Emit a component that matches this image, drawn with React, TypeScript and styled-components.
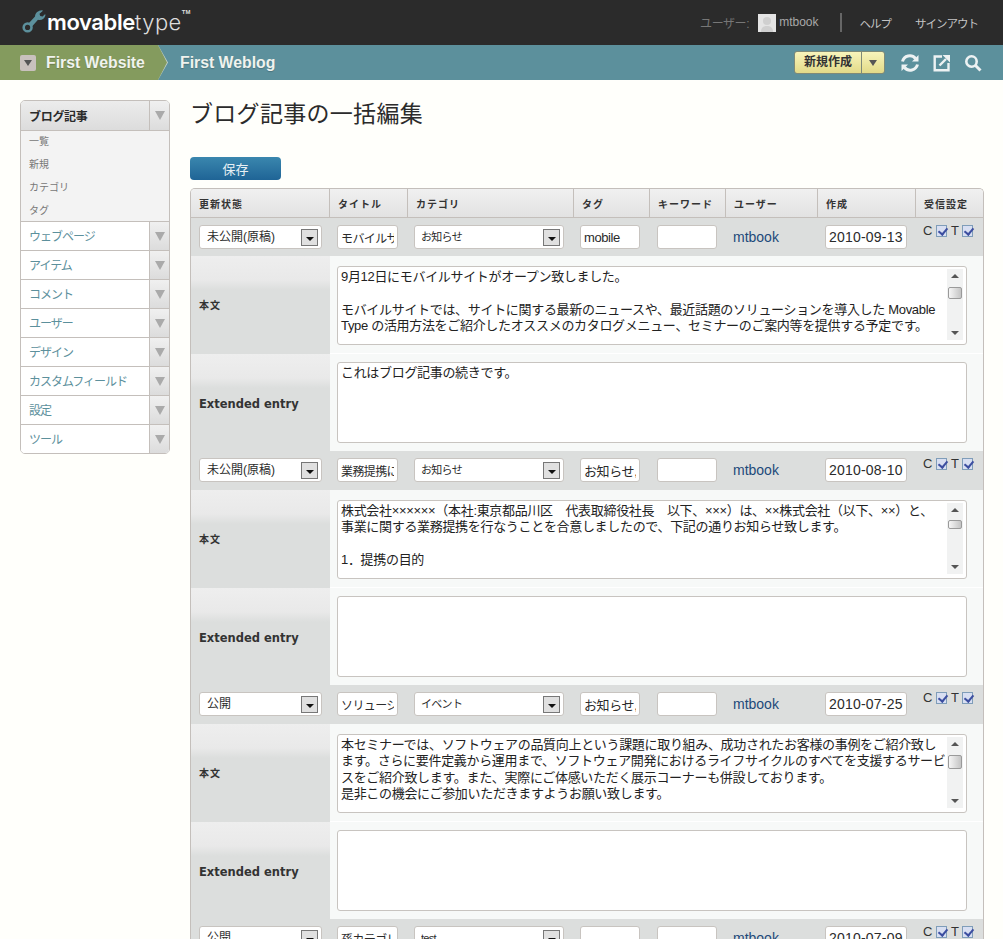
import { createGlobalStyle } from 'styled-components';
import styled from 'styled-components';

const jp = `"Liberation Sans", "Noto Sans CJK JP", sans-serif`;

const GlobalStyle = createGlobalStyle`
  html, body {
    margin: 0;
    height: 939px;
    overflow: hidden;
    background: #fffffb;
    font-family: ${jp};
    color: #2b2b2b;
  }
  * { box-sizing: border-box; }
`;

const Header = styled.header`
  height: 45px;
  background: #2b2b2b;
  display: flex;
  align-items: center;
  justify-content: space-between;
  padding: 0 25px 0 22px;
`;

const Logo = styled.div`
  display: flex;
  align-items: flex-start;
  height: 24px;
  margin-top: -2px;
`;

const LogoText = styled.span`
  font-family: Inter, sans-serif;
  font-size: 22px;
  line-height: 24px;
  color: #fff;
  margin-left: 1px;
  b { font-weight: 600; letter-spacing: -0.4px; }
  span { font-weight: 300; letter-spacing: 0.4px; color: #ddd; }
`;

const Tm = styled.sup`
  font-family: "Liberation Sans", sans-serif;
  font-size: 6px;
  font-weight: bold;
  line-height: 8px;
  color: #ddd;
  margin: -2px 0 0 0;
`;

const UserNav = styled.nav`
  display: flex;
  align-items: center;
  font-size: 12px;
`;

const UserLabel = styled.span`
  color: #777;
  letter-spacing: -0.4px;
  margin-right: 9px;
`;

const Avatar = styled.span`
  width: 18px;
  height: 18px;
  background: #e4e4e4;
  display: flex;
  margin-right: 3px;
`;

const UserName = styled.span`
  color: #a8a8a8;
  padding-right: 21px;
  border-right: 2px solid #666;
  line-height: 19px;
  margin-right: 18px;
`;

const TopLink = styled.a<{ $last?: boolean }>`
  color: #c4c4c4;
  font-size: 11.5px;
  letter-spacing: -1px;
  margin-right: ${p => (p.$last ? 0 : 24)}px;
`;

const Crumbs = styled.div`
  height: 35px;
  background: #5c909c;
  display: flex;
  align-items: center;
  justify-content: space-between;
  padding-right: 21px;
`;

const CrumbGroup = styled.div`
  display: flex;
  align-items: center;
  height: 100%;
`;

const Website = styled.div`
  position: relative;
  width: 158px;
  height: 100%;
  background: #849b5e;
  display: flex;
  align-items: center;
  padding-left: 20px;
  &::after {
    content: "";
    position: absolute;
    left: 158px;
    top: 0;
    width: 9px;
    height: 35px;
    background: #849b5e;
    clip-path: polygon(0 0, 100% 50%, 0 100%);
  }
  &::before {
    content: "";
    position: absolute;
    left: 158px;
    top: 0;
    width: 10px;
    height: 35px;
    background: #c9d4cf;
    clip-path: polygon(0 0, 100% 50%, 0 100%);
  }
`;

const Toggler = styled.span`
  width: 16px;
  height: 16px;
  border-radius: 2px;
  background: #c9c1bd;
  display: flex;
  align-items: center;
  justify-content: center;
  margin-right: 10px;
  &::after {
    content: "";
    border: 4px solid transparent;
    border-top: 6px solid #555;
    border-bottom: 0;
  }
`;

const CrumbText = styled.span<{ $offset?: number }>`
  font-size: 15.8px;
  font-weight: bold;
  color: #f0f3ee;
  margin-left: ${p => p.$offset ?? 0}px;
  text-shadow: 0 1px 1px rgba(0, 0, 0, 0.2);
  white-space: nowrap;
`;

const Actions = styled.div`
  display: flex;
  align-items: center;
`;

const NewButton = styled.div`
  display: flex;
  height: 23px;
  border: 1px solid #7f8a78;
  border-radius: 3px;
  background: linear-gradient(#f8f4bb, #e2da88);
  margin-right: 2px;
`;

const NewLabel = styled.span`
  width: 67px;
  text-align: center;
  font-size: 12px;
  font-weight: bold;
  line-height: 21px;
  color: #333;
  border-right: 1px solid #7f8a78;
`;

const NewArrow = styled.span`
  width: 22px;
  display: flex;
  align-items: center;
  justify-content: center;
  &::after {
    content: "";
    border: 4px solid transparent;
    border-top: 6px solid #555;
    border-bottom: 0;
  }
`;

const ActionIcon = styled.svg`
  display: block;
  margin-left: 13px;
  fill: none;
  stroke: #edf2f3;
`;

const Main = styled.div`
  display: flex;
  align-items: flex-start;
  padding: 20px 19px 0 20px;
  gap: 20px;
`;

const Menu = styled.aside`
  width: 150px;
  flex: none;
  border: 1px solid #c4bfbb;
  border-radius: 5px;
  overflow: hidden;
  background: #fff;
`;

const MenuRow = styled.div<{ $active?: boolean }>`
  display: flex;
  height: ${p => (p.$active ? 29 : 28)}px;
  background: ${p => (p.$active ? 'linear-gradient(#ececec, #dcdcdc)' : '#fff')};
  & + & { border-top: 1px solid #c4bfbb; height: 29px; }
`;

const MenuLabel = styled.a<{ $active?: boolean }>`
  flex: 1;
  font-size: 12px;
  line-height: 28px;
  padding: ${p => (p.$active ? '2px' : '1px')} 0 0 8px;
  letter-spacing: ${p => (p.$active ? -0.3 : -1)}px;
  color: ${p => (p.$active ? '#2b2b2b' : '#5c909c')};
  font-weight: ${p => (p.$active ? 'bold' : 'normal')};
`;

const MenuArrow = styled.span`
  width: 20px;
  border-left: 1px solid #c4bfbb;
  background: linear-gradient(#f0f0f0, #dcdcdc);
  display: flex;
  align-items: center;
  justify-content: center;
  &::after {
    content: "";
    border: 5px solid transparent;
    border-top: 9px solid #aaa;
    border-bottom: 0;
  }
`;

const SubMenu = styled.div`
  background: #f3f3f3;
  border-top: 1px solid #c4bfbb;
  border-bottom: 1px solid #c4bfbb;
  height: 92px;
`;

const SubItem = styled.a`
  display: block;
  height: 23px;
  line-height: 21px;
  padding-left: 8px;
  font-size: 10px;
  color: #777;
`;

const Content = styled.main`
  flex: 1;
  min-width: 0;
`;

const Title = styled.h1`
  margin: 0;
  font-size: 23px;
  font-weight: 400;
  line-height: 28px;
  letter-spacing: 0.3px;
  color: #2b2b2b;
`;

const SaveButton = styled.button`
  display: block;
  width: 91px;
  height: 23px;
  margin: 29px 0 8px;
  padding: 0;
  border: 0;
  border-radius: 4px;
  background: linear-gradient(#3a87ae, #1f6496);
  color: #e8f0f4;
  font-family: ${jp};
  font-size: 13px;
`;

const Sheet = styled.table`
  width: 794px;
  table-layout: fixed;
  border-collapse: separate;
  border-spacing: 0;
  border: 1px solid #c4bfbb;
  border-bottom: 0;
  border-radius: 5px 5px 0 0;
  overflow: hidden;
`;

const Head = styled.th`
  height: 29px;
  padding: 0 0 0 8px;
  text-align: left;
  font-size: 10px;
  font-weight: bold;
  letter-spacing: 1px;
  color: #333;
  background: linear-gradient(#f0f0f0, #e2e2e2);
  border-right: 1px solid #c4bfbb;
  border-bottom: 1px solid #c4bfbb;
  &:last-child { border-right: 0; }
`;

const Cell = styled.td<{ $first?: boolean, $left?: number, $right?: number }>`
  background: #dcdedd;
  padding: 7px ${p => p.$right ?? 8}px ${p => (p.$first ? 7 : 8)}px ${p => p.$left ?? 8}px;
  vertical-align: top;
`;

const Field = styled.input<{ $kind?: 'date' | 'tags' }>`
  display: block;
  width: 100%;
  height: 24px;
  padding: 0 3px;
  border: 1px solid #c8c4c0;
  border-radius: 3px;
  background: #fff;
  outline: 0;
  color: #2b2b2b;
  font-family: ${jp};
  font-size: ${p => (p.$kind === 'date' ? 14 : p.$kind === 'tags' ? 13 : 12)}px;
  letter-spacing: ${p => (p.$kind === 'date' ? 0.2 : p.$kind === 'tags' ? -0.4 : -0.6)}px;
`;

const SelectWrap = styled.div`
  position: relative;
  height: 24px;
`;

const Select = styled.select<{ $small?: boolean }>`
  display: block;
  width: 100%;
  height: 24px;
  padding: 0 0 0 ${p => (p.$small ? 6 : 7)}px;
  appearance: none;
  border: 1px solid #c8c4c0;
  border-radius: 3px;
  background: #fff;
  color: #2b2b2b;
  font-family: ${jp};
  font-size: ${p => (p.$small ? 11 : 12)}px;
  letter-spacing: ${p => (p.$small ? -0.7 : 0)}px;
`;

const SelectArrow = styled.span`
  position: absolute;
  top: 4px;
  right: 4px;
  width: 17px;
  height: 17px;
  border: 1px solid #777;
  background: #e0e0e0;
  display: flex;
  align-items: center;
  justify-content: center;
  pointer-events: none;
  &::after {
    content: "";
    margin-top: 3px;
    border: 4px solid transparent;
    border-top: 4px solid #111;
    border-bottom: 0;
  }
`;

const Author = styled.a`
  display: block;
  line-height: 24px;
  font-size: 14px;
  color: #1d4a7a;
`;

const Receive = styled.div`
  display: flex;
  align-items: center;
  margin-left: -1px;
  font-size: 13px;
  line-height: 12px;
  color: #333;
`;

const Check = styled.input`
  appearance: none;
  position: relative;
  flex: none;
  width: 11px;
  height: 12px;
  margin: 0 4px 0 3.5px;
  border: 1px solid #7f9db9;
  background: #d8dff2;
  &::after {
    content: "";
    position: absolute;
    left: 3px;
    top: 0;
    width: 4px;
    height: 7px;
    border: solid #3c4ea0;
    border-width: 0 2px 2px 0;
    transform: rotate(40deg);
  }
`;

const Label = styled.th<{ $body?: boolean }>`
  padding: ${p => (p.$body ? '0 0 2px 8px' : '2px 0 0 8px')};
  text-align: left;
  vertical-align: middle;
  background: linear-gradient(#eeeeee, #e9e9e9 24px, #dcdedd 34px);
  font-family: "DejaVu Sans", sans-serif;
  font-size: 11.5px;
  font-weight: bold;
  color: #333;
`;

const SmallLabel = styled.span`
  font-family: ${jp};
  font-size: 10px;
  letter-spacing: 1px;
`;

const EditCell = styled.td<{ $body?: boolean }>`
  background: #f7f9f8;
  padding: ${p => (p.$body ? '10px 16px 8px 7px' : '8px 16px 8px 7px')};
  ${p => (p.$body ? 'border-bottom: 1px solid #fff;' : '')}
`;

const EditorWrap = styled.div`
  position: relative;
`;

const Editor = styled.textarea<{ $tall?: boolean }>`
  display: block;
  width: 100%;
  height: ${p => (p.$tall ? 81 : 79)}px;
  padding: 2px 3px;
  border: 1px solid #c8c4c0;
  border-radius: 3px;
  background: #fff;
  outline: 0;
  resize: none;
  font-family: ${jp};
  font-size: 13px;
  line-height: 16.4px;
  letter-spacing: -0.32px;
  color: #222;
  overflow: hidden;
`;

const ScrollBar = styled.div`
  position: absolute;
  top: 3px;
  right: 4px;
  bottom: 5px;
  width: 16px;
  background: #f1f2f2;
  &::before, &::after {
    content: "";
    position: absolute;
    left: 4px;
    border: 4px solid transparent;
  }
  &::before { top: 5px; border-top: 0; border-bottom: 4px solid #555; }
  &::after { bottom: 5px; border-bottom: 0; border-top: 4px solid #555; }
`;

const ScrollThumb = styled.div<{ $top: number, $height: number }>`
  position: absolute;
  left: 1px;
  right: 1px;
  top: ${p => p.$top}px;
  height: ${p => p.$height}px;
  border: 1px solid #9a9a9a;
  border-radius: 2px;
  background: linear-gradient(90deg, #f6f6f6, #c4c4c4);
`;

const subItems = ['一覧', '新規', 'カテゴリ', 'タグ'];
const menuItems = ['ウェブページ', 'アイテム', 'コメント', 'ユーザー', 'デザイン', 'カスタムフィールド', '設定', 'ツール'];
const columns = [
  ['更新状態', 139],
  ['タイトル', 78],
  ['カテゴリ', 166],
  ['タグ', 76],
  ['キーワード', 76],
  ['ユーザー', 92],
  ['作成', 98],
  ['受信設定', 67],
] as const;

const entries = [
  {
    status: '未公開(原稿)',
    title: 'モバイルサイトオープン',
    category: 'お知らせ',
    tags: 'mobile',
    date: '2010-09-13',
    body: '9月12日にモバイルサイトがオープン致しました。\n\nモバイルサイトでは、サイトに関する最新のニュースや、最近話題のソリューションを導入した Movable\nType の活用方法をご紹介したオススメのカタログメニュー、セミナーのご案内等を提供する予定です。',
    more: 'これはブログ記事の続きです。',
    thumb: [18, 12],
  },
  {
    status: '未公開(原稿)',
    title: '業務提携について',
    category: 'お知らせ',
    tags: 'お知らせ,提携',
    date: '2010-08-10',
    body: '株式会社××××××（本社:東京都品川区　代表取締役社長　以下、×××）は、××株式会社（以下、××）と、\n事業に関する業務提携を行なうことを合意しましたので、下記の通りお知らせ致します。\n\n1．提携の目的',
    more: '',
    thumb: [17, 9],
  },
  {
    status: '公開',
    title: 'ソリューションセミナー',
    category: 'イベント',
    tags: 'お知らせ,セミナー',
    date: '2010-07-25',
    body: '本セミナーでは、ソフトウェアの品質向上という課題に取り組み、成功されたお客様の事例をご紹介致し\nます。さらに要件定義から運用まで、ソフトウェア開発におけるライフサイクルのすべてを支援するサービ\nスをご紹介致します。また、実際にご体感いただく展示コーナーも併設しております。\n是非この機会にご参加いただきますようお願い致します。',
    more: '',
    thumb: [18, 14],
  },
  {
    status: '公開',
    title: '孫カテゴリのテスト',
    category: 'test',
    tags: '',
    date: '2010-07-09',
    body: '',
    more: '',
    thumb: [18, 12],
  },
];

const Wrench = () => (
  <svg width="24" height="24" viewBox="0 0 24 24" style={{ display: 'block' }}>
    <path
      d="M6.5 13.5 L13 6.5 C13.2 3 16 0.5 20 0.3 L21 0.8 L17.5 3.8 L18.2 6 L20.6 6.4 L23.2 4 L23.4 5.4 C22.8 8.6 19.6 10.6 16 9.8 L10 16.5 Z"
      fill="#5c909c"
    />
    <circle cx="5.6" cy="17.4" r="3.9" fill="none" stroke="#5c909c" strokeWidth="2.6" />
  </svg>
);

const Silhouette = () => (
  <svg width="18" height="18" viewBox="0 0 18 18">
    <circle cx="9" cy="7" r="4" fill="#cfcfcf" />
    <path d="M3 18 C3 13 6 12 9 12 C12 12 15 13 15 18 Z" fill="#cfcfcf" />
  </svg>
);

const EntryRows = ({ entry, first }: { entry: typeof entries[number], first: boolean }) => (
  <>
    <tr>
      <Cell $first={first}>
        <SelectWrap>
          <Select defaultValue={entry.status}>
            <option>未公開(原稿)</option>
            <option>公開</option>
          </Select>
          <SelectArrow />
        </SelectWrap>
      </Cell>
      <Cell $first={first} $left={7} $right={10}><Field defaultValue={entry.title} /></Cell>
      <Cell $first={first} $left={6} $right={10}>
        <SelectWrap>
          <Select $small defaultValue={entry.category}>
            <option>お知らせ</option>
            <option>イベント</option>
            <option>test</option>
          </Select>
          <SelectArrow />
        </SelectWrap>
      </Cell>
      <Cell $first={first} $left={6} $right={10}><Field $kind="tags" defaultValue={entry.tags} /></Cell>
      <Cell $first={first} $left={7} $right={9}><Field /></Cell>
      <Cell $first={first} $left={7}><Author>mtbook</Author></Cell>
      <Cell $first={first} $left={7} $right={9}><Field $kind="date" defaultValue={entry.date} /></Cell>
      <Cell $first={first}>
        <Receive>
          C<Check type="checkbox" defaultChecked />
          T<Check type="checkbox" defaultChecked />
        </Receive>
      </Cell>
    </tr>
    <tr>
      <Label $body><SmallLabel>本文</SmallLabel></Label>
      <EditCell $body colSpan={7}>
        <EditorWrap>
          <Editor wrap="off" defaultValue={entry.body} />
          <ScrollBar><ScrollThumb $top={entry.thumb[0]} $height={entry.thumb[1]} /></ScrollBar>
        </EditorWrap>
      </EditCell>
    </tr>
    <tr>
      <Label>Extended entry</Label>
      <EditCell colSpan={7}><Editor $tall wrap="off" defaultValue={entry.more} /></EditCell>
    </tr>
  </>
);

export default function App() {
  return (
    <>
      <GlobalStyle />
      <Header>
        <Logo>
          <Wrench />
          <LogoText><b>movable</b><span>type</span></LogoText>
          <Tm>TM</Tm>
        </Logo>
        <UserNav>
          <UserLabel>ユーザー:</UserLabel>
          <Avatar><Silhouette /></Avatar>
          <UserName>mtbook</UserName>
          <TopLink>ヘルプ</TopLink>
          <TopLink $last>サインアウト</TopLink>
        </UserNav>
      </Header>
      <Crumbs>
        <CrumbGroup>
          <Website>
            <Toggler />
            <CrumbText>First Website</CrumbText>
          </Website>
          <CrumbText $offset={22}>First Weblog</CrumbText>
        </CrumbGroup>
        <Actions>
          <NewButton>
            <NewLabel>新規作成</NewLabel>
            <NewArrow />
          </NewButton>
          <ActionIcon width="20" height="20" viewBox="0 0 20 20" strokeWidth="3">
            <path d="M2.5 8.5 A7.5 7.5 0 0 1 15.5 5.5" />
            <path d="M17.5 11.5 A7.5 7.5 0 0 1 4.5 14.5" />
            <path d="M18.5 2 L18.5 8.5 L12 8.5 Z" fill="#edf2f3" stroke="none" />
            <path d="M1.5 18 L1.5 11.5 L8 11.5 Z" fill="#edf2f3" stroke="none" />
          </ActionIcon>
          <ActionIcon width="18" height="18" viewBox="0 0 18 18" strokeWidth="2.4">
            <path d="M9 2.5 H1.7 V16.3 H15.5 V9" />
            <path d="M6.5 11.5 L13 5" />
            <path d="M9.5 1 H17 V8.5 Z" fill="#edf2f3" stroke="none" />
          </ActionIcon>
          <ActionIcon width="18" height="18" viewBox="0 0 18 18" strokeWidth="2.6">
            <circle cx="7.5" cy="7.5" r="5.2" />
            <path d="M11.5 11.5 L16.5 16.5" strokeWidth="3" />
          </ActionIcon>
        </Actions>
      </Crumbs>
      <Main>
        <Menu>
          <MenuRow $active>
            <MenuLabel $active>ブログ記事</MenuLabel>
            <MenuArrow />
          </MenuRow>
          <SubMenu>
            {subItems.map(item => <SubItem key={item}>{item}</SubItem>)}
          </SubMenu>
          {menuItems.map(item => (
            <MenuRow key={item}>
              <MenuLabel>{item}</MenuLabel>
              <MenuArrow />
            </MenuRow>
          ))}
        </Menu>
        <Content>
          <Title>ブログ記事の一括編集</Title>
          <SaveButton>保存</SaveButton>
          <Sheet>
            <colgroup>
              {columns.map(([name, width]) => <col key={name} width={width} />)}
            </colgroup>
            <thead>
              <tr>
                {columns.map(([name]) => <Head key={name}>{name}</Head>)}
              </tr>
            </thead>
            <tbody>
              {entries.map((entry, index) => (
                <EntryRows key={entry.date} entry={entry} first={index === 0} />
              ))}
            </tbody>
          </Sheet>
        </Content>
      </Main>
    </>
  );
}
